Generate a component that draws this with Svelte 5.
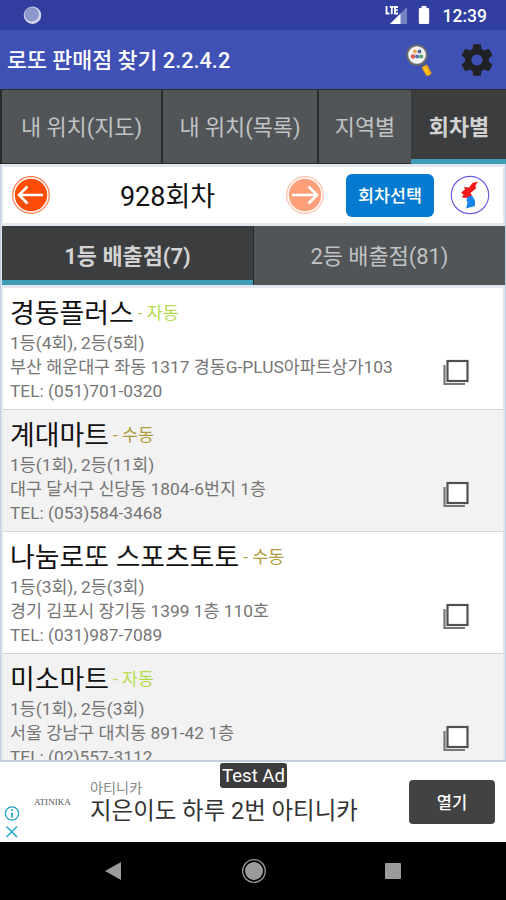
<script>
  const tabs = [
    { label: "내 위치(지도)", size: "wide" },
    { label: "내 위치(목록)", size: "mid" },
    { label: "지역별", size: "small" },
    { label: "회차별", size: "last" }
  ];
  let activeTab = 3;
  let activeRank = 0;
  const ranks = ["1등 배출점(7)", "2등 배출점(81)"];

  const shops = [
    { name: "경동플러스", auto: true, wins: "1등(4회), 2등(5회)", address: "부산 해운대구 좌동 1317 경동G-PLUS아파트상가103", tel: "(051)701-0320" },
    { name: "계대마트", auto: false, wins: "1등(1회), 2등(11회)", address: "대구 달서구 신당동 1804-6번지 1층", tel: "(053)584-3468" },
    { name: "나눔로또 스포츠토토", auto: false, wins: "1등(3회), 2등(3회)", address: "경기 김포시 장기동 1399 1층 110호", tel: "(031)987-7089" },
    { name: "미소마트", auto: true, wins: "1등(1회), 2등(3회)", address: "서울 강남구 대치동 891-42 1층", tel: "(02)557-3112" }
  ];
</script>

<div class="screen">
  <div class="status">
    <svg class="dot" width="20" height="20" viewBox="0 0 20 20">
      <circle cx="10.500" cy="10.200" r="8.700" fill="#d5daf0" />
      <circle cx="9.800" cy="9.400" r="7.200" fill="#8f98cd" />
    </svg>
    <svg class="signal" width="24" height="20" viewBox="0 0 24 20">
      <path d="M22 2v17H5z" fill="#7681c1" />
      <path d="M15.500 8.500V19H5z" fill="#fff" />
      <path d="M1.500 1v7.500h3M4.800 2h4M6.800 2v7.200M13 2h-3v6.500h3M10 5.200h2.700" fill="none" stroke="#fff" stroke-width="1.800" />
    </svg>
    <svg class="battery" width="12" height="20" viewBox="0 0 12 20">
      <path d="M3.500 1h5v2H10q1.200 0 1.200 1.200v13.600Q11.200 19 10 19H2Q.8 19 .8 17.800V4.200Q.8 3 2 3h1.500z" fill="#fff" />
    </svg>
    <span class="clock">12:39</span>
  </div>

  <header>
    <h1>로또 판매점 찾기 2.2.4.2</h1>
    <svg class="search" width="28" height="34" viewBox="0 0 28 34">
      <path d="M17 20l4 5" stroke="#555c70" stroke-width="2.500" />
      <path d="M16.500 24.500l5.500-3 4.500 8.500q-1 2.500-5 3z" fill="#f5a40c" />
      <path d="M18 24l2-1 4.500 8-2 1z" fill="#ffc928" />
      <circle cx="12" cy="12" r="9.800" fill="#f4f4f2" stroke="#686b70" stroke-width="2" />
      <circle cx="10" cy="8.500" r="1.900" fill="#e9a850" />
      <circle cx="14.500" cy="8.500" r="1.900" fill="#53679c" />
      <circle cx="8" cy="13.500" r="2.200" fill="#df5959" />
      <circle cx="12.200" cy="13.500" r="2.100" fill="#5873b9" />
      <circle cx="16.200" cy="13.500" r="2" fill="#4ba873" />
    </svg>
    <svg class="gear" width="38" height="38" viewBox="0 0 24 24">
      <path fill="#202124" d="M19.430 12.980c.04-.32.070-.64.070-.98s-.03-.66-.07-.98l2.110-1.650c.19-.15.240-.42.120-.64l-2-3.460c-.12-.22-.39-.3-.61-.22l-2.490 1c-.52-.4-1.080-.73-1.690-.98l-.38-2.650C14.460 2.180 14.250 2 14 2h-4c-.25 0-.46.180-.49.420l-.38 2.650c-.61.250-1.170.59-1.690.98l-2.490-1c-.23-.09-.49 0-.61.220l-2 3.460c-.13.220-.07.490.120.640l2.110 1.650c-.04.320-.07.650-.07.980s.03.660.07.980l-2.110 1.650c-.19.150-.24.420-.12.640l2 3.460c.12.220.39.300.61.220l2.490-1c.52.400 1.080.730 1.690.980l.38 2.650c.03.240.240.420.490.420h4c.25 0 .46-.18.490-.42l.38-2.650c.61-.25 1.170-.59 1.690-.98l2.490 1c.23.090.490 0 .61-.22l2-3.460c.12-.22.070-.49-.12-.64l-2.110-1.650zM12 15.500c-1.930 0-3.500-1.570-3.500-3.500s1.570-3.500 3.500-3.500 3.500 1.570 3.500 3.500-1.570 3.500-3.500 3.500z" />
    </svg>
  </header>

  <nav class="tabs">
    {#each tabs as tab, i}
      <button class="tab {tab.size}" class:active={activeTab === i} on:click={() => (activeTab = i)}>{tab.label}</button>
    {/each}
  </nav>

  <main>
    <div class="round">
      <svg class="prev" width="40" height="40" viewBox="0 0 40 40">
        <circle cx="20" cy="20" r="18.300" fill="#fff" stroke="#ff7a4c" stroke-width="1.200" />
        <circle cx="20" cy="20" r="16.200" fill="#fc4c06" />
        <path d="M32 20H8M16.500 11.500L8 20l8.500 8.500" fill="none" stroke="#fff" stroke-width="2.600" />
      </svg>
      <strong>928회차</strong>
      <svg class="next" width="40" height="40" viewBox="0 0 40 40">
        <circle cx="20" cy="20" r="18.300" fill="#fff" stroke="#ffc0a8" stroke-width="1.200" />
        <circle cx="20" cy="20" r="16.200" fill="#ffa07b" />
        <path d="M7 20h24M23.500 11.500L32 20l-8.500 8.500" fill="none" stroke="#fff" stroke-width="2.600" />
      </svg>
      <button class="pick">회차선택</button>
      <svg class="map" width="40" height="40" viewBox="0 0 40 40">
        <circle cx="20" cy="20" r="18.700" fill="#fff" stroke="#6c5ee0" stroke-width="1.200" />
        <path d="M28 6.500l-5.500 1.500-3.500 4.500-5-.5 1 2.500-4 3 2.500 2-1.500 3 4 .5 4-1 2-1.500-1.500-2.500 5.500-4.500-.5-3z" fill="#f51919" />
        <path d="M17.500 22l4.500-1.500 3 5v5.500l-3.500 1-5.500 1.500 1.500-5.500-1-3z" fill="#1685ee" />
      </svg>
    </div>

    <div class="ranks">
      {#each ranks as rank, i}
        <button class="rank" class:active={activeRank === i} on:click={() => (activeRank = i)}>{rank}</button>
      {/each}
    </div>

    <ul>
      {#each shops as shop}
        <li>
          <div class="info">
            <h2>{shop.name}<small class:auto={shop.auto}>- {shop.auto ? "자동" : "수동"}</small></h2>
            <p>{shop.wins}</p>
            <p>{shop.address}</p>
            <p>TEL: {shop.tel}</p>
          </div>
          <svg class="copy" width="28" height="28" viewBox="0 0 28 28">
            <path d="M3.500 6v19H24" fill="none" stroke="#777" stroke-width="2.200" />
            <rect x="6.500" y="2" width="20" height="20" fill="#fff" stroke="#505050" stroke-width="2.200" />
          </svg>
        </li>
      {/each}
    </ul>
  </main>

  <div class="ad">
    <span class="test">Test Ad</span>
    <div class="marks">
      <svg width="16" height="36" viewBox="0 0 16 36">
        <circle cx="8" cy="7.500" r="6.600" fill="none" stroke="#27a5c8" stroke-width="1.300" />
        <path d="M8 6.500v5M8 3.300v1.800" stroke="#27a5c8" stroke-width="1.800" />
        <path d="M2.500 20.500l10.500 10.500M13 20.500l-10.500 10.500" stroke="#27a5c8" stroke-width="1.500" />
      </svg>
    </div>
    <span class="brand">ATINIKA</span>
    <div class="copyline">
      <small>아티니카</small>
      <p>지은이도 하루 2번 아티니카</p>
    </div>
    <button class="open">열기</button>
  </div>

  <footer>
    <svg width="20" height="24" viewBox="0 0 20 24"><path d="M18 3v18L2 12z" fill="#9b9b9b" /></svg>
    <svg width="26" height="26" viewBox="0 0 26 26">
      <circle cx="13" cy="13" r="11.300" fill="none" stroke="#9b9b9b" stroke-width="1.300" />
      <circle cx="13" cy="13" r="9" fill="#9b9b9b" />
    </svg>
    <svg width="16" height="16" viewBox="0 0 16 16"><rect width="16" height="16" rx="1" fill="#9b9b9b" /></svg>
  </footer>
</div>

<style>
  :global(body) {
    margin: 0;
  }
  .screen {
    width: 506px;
    height: 900px;
    display: flex;
    flex-direction: column;
    overflow: hidden;
    background: #fff;
    font-family: Roboto, "Noto Sans CJK KR", sans-serif;
  }
  h1, h2, p, ul {
    margin: 0;
    padding: 0;
    font-weight: 400;
    white-space: nowrap;
  }
  svg {
    display: block;
    flex: none;
  }
  button {
    border: 0;
    padding: 0;
    font-family: inherit;
    white-space: nowrap;
  }
  .status {
    flex: none;
    box-sizing: border-box;
    height: 30px;
    padding: 0 19px 0 22px;
    display: flex;
    align-items: center;
    background: #303f9f;
    color: #fff;
  }
  .dot {
    margin-right: auto;
  }
  .signal {
    margin-right: 9px;
  }
  .battery {
    margin-right: 13px;
  }
  .clock {
    padding-top: 2px;
    font-size: 17.5px;
    font-weight: 500;
    line-height: 28px;
  }
  header {
    flex: none;
    box-sizing: border-box;
    height: 59px;
    padding: 0 10px 0 7px;
    display: flex;
    align-items: center;
    background: #3f51b5;
    color: #fff;
  }
  h1 {
    flex: 1;
    padding-top: 2px;
    font-size: 21.7px;
    font-weight: 500;
    line-height: 30px;
  }
  .search {
    margin-right: 25px;
  }
  .tabs {
    flex: none;
    box-sizing: border-box;
    height: 75px;
    padding: 1px 0 0 2px;
    display: flex;
    gap: 2px;
    background: #292b2c;
  }
  .tab {
    height: 73px;
    padding-bottom: 2px;
    background: #515558;
    color: #c1c3c4;
    font-size: 21.9px;
  }
  .wide {
    width: 159px;
  }
  .mid {
    width: 154px;
  }
  .small {
    width: 92px;
  }
  .last {
    flex: 1;
  }
  .tab.active, .rank.active {
    background: #3b3d3e;
    border-bottom: 5px solid #3f9cb5;
    color: #d2d2d2;
    font-weight: 700;
  }
  .tab.active {
    height: 74px;
    padding: 1px 0 0 1px;
    margin-left: -2px;
  }
  main {
    flex: none;
    box-sizing: border-box;
    height: 598px;
    padding: 3px 2px 0;
    border: solid #c3cde0;
    border-width: 0 1px 2px 1px;
    background: #e2e7f0;
    overflow: hidden;
  }
  .round {
    box-sizing: border-box;
    height: 56px;
    padding: 0 12px 0 8px;
    display: flex;
    align-items: center;
    background: #fff;
  }
  .round strong {
    width: 233px;
    padding-top: 3px;
    text-align: center;
    font-size: 27px;
    font-weight: 400;
    line-height: 40px;
    color: #111;
  }
  .next {
    margin-left: 1px;
  }
  .pick {
    width: 88px;
    height: 43px;
    margin: 0 16px 0 21px;
    padding-bottom: 2px;
    border-radius: 6px;
    background: #047bd0;
    color: #fff;
    font-size: 17.4px;
    font-weight: 500;
  }
  .ranks {
    height: 59px;
    margin: 3px -2px 0 -1px;
    display: flex;
    gap: 1px;
    background: #292b2c;
  }
  .rank {
    flex: 1;
    padding-bottom: 2px;
    background: #515558;
    color: #c1c3c4;
    font-size: 21.9px;
  }
  .rank.active {
    padding: 3px 0 0;
  }
  ul {
    margin-top: 3px;
    list-style: none;
  }
  li {
    box-sizing: border-box;
    height: 122px;
    padding: 5px 34px 0 7px;
    border-bottom: 1px solid #d3d5d8;
    display: flex;
    justify-content: space-between;
    background: #fff;
  }
  li:nth-child(even) {
    background: #f2f2f2;
  }
  h2 {
    height: 38px;
    font-size: 26.9px;
    line-height: 41px;
    color: #111;
  }
  h2 small {
    margin-left: 4px;
    font-size: 17.3px;
    vertical-align: 4px;
    color: #b09c3e;
  }
  h2 small.auto {
    color: #b4dc4e;
  }
  li p {
    font-size: 17.35px;
    line-height: 24px;
    height: 24px;
    color: #757575;
  }
  .copy {
    margin-top: 66px;
  }
  .ad {
    flex: none;
    position: relative;
    box-sizing: border-box;
    height: 80px;
    padding: 0 11px 0 4px;
    display: flex;
    align-items: center;
    background: #fff;
  }
  .test {
    position: absolute;
    left: 220px;
    top: 1px;
    width: 67px;
    height: 25px;
    border-radius: 3px;
    background: #3c3c3c;
    color: #fff;
    font-size: 18.6px;
    line-height: 26px;
    text-align: center;
  }
  .marks {
    width: 30px;
    align-self: flex-end;
  }
  .brand {
    width: 56px;
    font: 9.1px "Liberation Serif", serif;
    color: #555;
  }
  .copyline {
    flex: 1;
  }
  .copyline small {
    display: block;
    height: 18px;
    font-size: 14.2px;
    line-height: 18px;
    color: #888;
  }
  .copyline p {
    font-size: 23.45px;
    line-height: 28px;
    color: #333;
  }
  .open {
    width: 86px;
    height: 44px;
    border-radius: 4px;
    background: #424242;
    color: #fff;
    font-size: 16.5px;
    font-weight: 500;
  }
  footer {
    flex: 1;
    padding: 0 105px 0 103px;
    display: flex;
    align-items: center;
    justify-content: space-between;
    background: #000;
  }
</style>
